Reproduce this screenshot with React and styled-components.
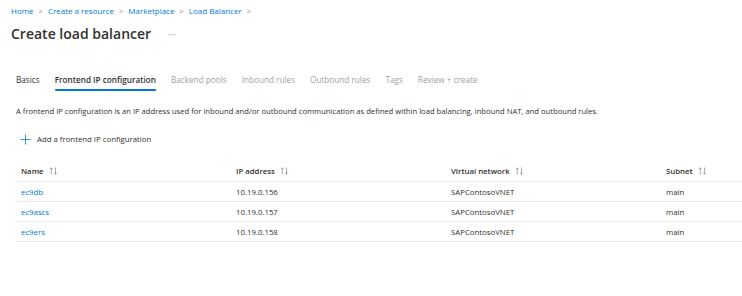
import React from 'react';
import styled, { createGlobalStyle } from 'styled-components';

const GlobalStyle = createGlobalStyle`
  html, body { margin: 0; padding: 0; background: #fff; overflow: hidden; }
  body { font-family: "Open Sans", "Noto Sans", Arial, sans-serif; color: #323130; }
`;

const crumbs = ['Home', 'Create a resource', 'Marketplace', 'Load Balancer'];
const tabs = ['Basics', 'Frontend IP configuration', 'Backend pools', 'Inbound rules', 'Outbound rules', 'Tags', 'Review + create'];
const columns = ['Name', 'IP address', 'Virtual network', 'Subnet'];
const rows = [
  { name: 'ec9db', ip: '10.19.0.156', vnet: 'SAPContosoVNET', subnet: 'main' },
  { name: 'ec9ascs', ip: '10.19.0.157', vnet: 'SAPContosoVNET', subnet: 'main' },
  { name: 'ec9ers', ip: '10.19.0.158', vnet: 'SAPContosoVNET', subnet: 'main' },
];

function App() {
  const activeTab = 1;
  const enabledUpTo = 1;

  return (
    <Page>
      <GlobalStyle />
      <Breadcrumb>
        {crumbs.map((c) => (
          <React.Fragment key={c}>
            <Crumb>{c}</Crumb>
            <Chevron>&gt;</Chevron>
          </React.Fragment>
        ))}
      </Breadcrumb>
      <TitleRow>
        <Title>Create load balancer</Title>
        <More>···</More>
      </TitleRow>

      <Content>
        <Tabs>
          {tabs.map((t, i) => (
            <Tab key={t} active={i === activeTab} disabled={i > enabledUpTo}>{t}</Tab>
          ))}
        </Tabs>

        <Description>
          A frontend IP configuration is an IP address used for inbound and/or outbound communication as defined within load balancing, inbound NAT, and outbound rules.
        </Description>

        <AddButton>
          <svg width="11" height="11" viewBox="0 0 11 11">
            <path d="M5.5 0.5v10M0.5 5.5h10" stroke="#2b88d8" strokeWidth="0.9" fill="none" />
          </svg>
          <span>Add a frontend IP configuration</span>
        </AddButton>

        <Table>
          <HeaderRow>
            {columns.map((c) => (
              <HeaderCell key={c}>
                {c}
                <SortIcon width="9" height="8" viewBox="0 0 9 8">
                  <path d="M2.3 7.5V0.8M0.9 2.2L2.3 0.8l1.4 1.4" stroke="#8a8886" strokeWidth="0.7" fill="none" />
                  <path d="M6.5 0.5v6.7M5.1 5.8l1.4 1.4 1.4-1.4" stroke="#8a8886" strokeWidth="0.7" fill="none" />
                </SortIcon>
              </HeaderCell>
            ))}
          </HeaderRow>
          {rows.map((r) => (
            <Row key={r.name}>
              <Cell link>{r.name}</Cell>
              <Cell>{r.ip}</Cell>
              <Cell>{r.vnet}</Cell>
              <Cell>{r.subnet}</Cell>
            </Row>
          ))}
        </Table>
      </Content>
    </Page>
  );
}

export default App;

const Page = styled.div`
  width: 742px;
  height: 296px;
  overflow: hidden;
  padding: 4px 0 0 11px;
  box-sizing: border-box;
`;

const Breadcrumb = styled.div`
  display: flex;
  align-items: center;
  gap: 5px;
  height: 13px;
  font-size: 8px;
`;

const Crumb = styled.span`
  color: #0078d4;
`;

const Chevron = styled.span`
  color: #8a8886;
  font-size: 7.5px;
`;

const TitleRow = styled.div`
  display: flex;
  align-items: center;
  margin-top: 5px;
  height: 22px;
`;

const Title = styled.h1`
  margin: 0;
  font-size: 14px;
  font-weight: 600;
  color: #323130;
`;

const More = styled.span`
  margin-left: 17px;
  font-size: 8px;
  color: #605e5c;
  letter-spacing: 0.5px;
`;

const Content = styled.div`
  padding-left: 5px;
  margin-top: 23px;
`;

const Tabs = styled.div`
  display: flex;
  gap: 15px;
  height: 24px;
  align-items: center;
`;

const Tab = styled.div`
  position: relative;
  font-size: 8.2px;
  font-weight: ${({ active }) => (active ? 600 : 400)};
  color: ${({ disabled }) => (disabled ? '#a19f9d' : '#323130')};
  padding: 4px 0;
  &::after {
    content: '';
    display: ${({ active }) => (active ? 'block' : 'none')};
    position: absolute;
    left: 0;
    right: 0;
    bottom: -2px;
    height: 2px;
    border-radius: 1px;
    background: #0078d4;
  }
`;

const Description = styled.p`
  margin: 14px 0 0;
  font-size: 7.65px;
  line-height: 12px;
  color: #323130;
`;

const AddButton = styled.div`
  display: flex;
  align-items: center;
  gap: 6px;
  margin-top: 16px;
  padding-left: 4px;
  font-size: 7.8px;
  color: #323130;
  height: 12px;
`;

const Table = styled.div`
  margin-top: 15px;
  width: 860px;
`;

const HeaderRow = styled.div`
  display: grid;
  grid-template-columns: repeat(4, 215px);
  height: 21px;
  align-items: center;
  border-bottom: 1px solid #edebe9;
`;

const HeaderCell = styled.div`
  display: flex;
  align-items: center;
  gap: 5px;
  padding-left: 5px;
  font-size: 7.8px;
  font-weight: 600;
  color: #323130;
`;

const SortIcon = styled.svg`
  display: block;
`;

const Row = styled.div`
  display: grid;
  grid-template-columns: repeat(4, 215px);
  height: 19px;
  align-items: center;
  border-bottom: 1px solid #edebe9;
`;

const Cell = styled.div`
  padding-left: 5px;
  font-size: 7.8px;
  color: ${({ link }) => (link ? '#0078d4' : '#323130')};
`;
